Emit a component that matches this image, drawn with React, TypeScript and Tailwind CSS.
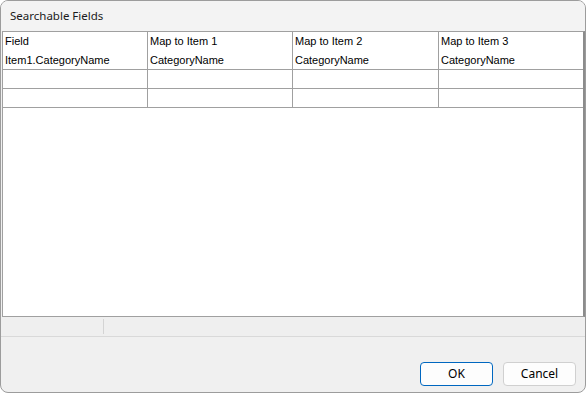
import React from 'react';

const columns = ['Field', 'Map to Item 1', 'Map to Item 2', 'Map to Item 3'];
const firstRow = ['Item1.CategoryName', 'CategoryName', 'CategoryName', 'CategoryName'];

const App: React.FC = () => {
  return (
    <div className="w-[586px] h-[393px] bg-white">
      <div className="w-full h-full flex flex-col bg-[#f0f0f0] border border-[#9c9c9c] rounded-lg overflow-hidden">
        {/* Title bar */}
        <div
          className="h-[30px] shrink-0 flex items-center px-[9px] bg-[#f3f3f3] text-[11.5px] text-[#1b1b1b]"
          style={{ fontFamily: '"Noto Sans", sans-serif' }}
        >
          Searchable Fields
        </div>

        {/* Grid */}
        <div
          className="h-[286px] shrink-0 bg-white border-t border-l border-b border-[#a0a0a0] border-r-2 border-r-[#8c8c8c] ml-[1px]"
          style={{ fontFamily: '"Liberation Sans", Arial, sans-serif' }}
        >
          <div className="grid grid-cols-[145px_145px_146px_1fr] text-[11px] text-black">
            {columns.map((c, i) => (
              <div
                key={c}
                className={`h-[19px] flex items-center pl-[2px] ${i < 3 ? 'border-r border-[#a0a0a0]' : ''}`}
              >
                {c}
              </div>
            ))}
            {firstRow.map((c, i) => (
              <div
                key={i}
                className={`h-[19px] flex items-center pl-[2px] border-b border-[#a0a0a0] ${i < 3 ? 'border-r' : ''}`}
              >
                {c}
              </div>
            ))}
            {[0, 1, 2, 3, 4, 5, 6, 7].map(i => (
              <div
                key={'e' + i}
                className={`h-[19px] border-b border-[#a0a0a0] ${i % 4 < 3 ? 'border-r' : ''}`}
              />
            ))}
          </div>
        </div>

        {/* Status bar */}
        <div className="h-[20px] shrink-0 flex items-stretch bg-[#efefef] border-b border-[#d9d9d9]">
          <div className="w-[103px] my-[2px] border-r border-[#d4d4d4]" />
          <div className="flex-1" />
        </div>

        {/* Buttons */}
        <div
          className="flex-1 flex items-end justify-end gap-[10px] pr-[9px] pb-[6px] text-[12px] text-black"
          style={{ fontFamily: '"Noto Sans", sans-serif' }}
        >
          <button className="w-[73px] h-[24px] rounded-[4px] border border-[#0067c0] bg-[#fdfdfd] leading-none">
            OK
          </button>
          <button className="w-[73px] h-[24px] rounded-[4px] border border-[#d0d0d0] bg-[#fdfdfd] leading-none">
            Cancel
          </button>
        </div>
      </div>
    </div>
  );
};

export default App;
